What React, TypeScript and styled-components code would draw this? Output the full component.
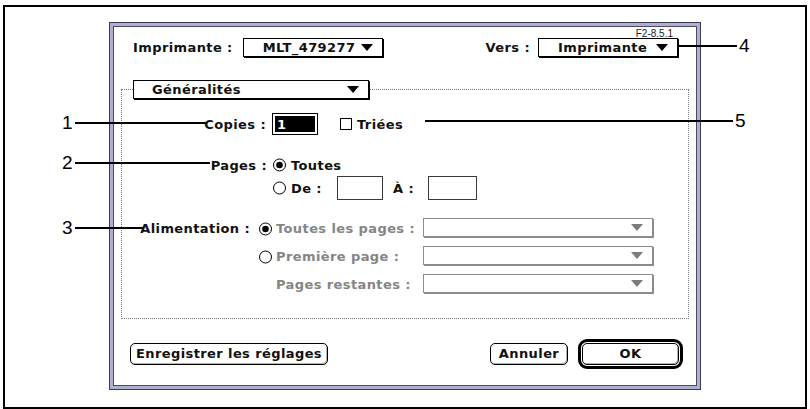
import React from 'react';
import styled, { createGlobalStyle } from 'styled-components';

const GlobalStyle = createGlobalStyle`
  html, body {
    margin: 0;
    padding: 0;
    background: #fff;
  }
  body {
    font-family: "DejaVu Sans", "Liberation Sans", sans-serif;
  }
`;

const Page = styled.div`
  position: relative;
  box-sizing: border-box;
  width: 810px;
  height: 409px;
  padding: 5px 0 0 3px;
  background: #fff;
  overflow: hidden;
`;

const Figure = styled.div`
  box-sizing: border-box;
  width: 804px;
  height: 404px;
  border: 2px solid #000;
  padding: 15px 0 0 104px;
`;

const Dialog = styled.div`
  box-sizing: border-box;
  width: 592px;
  height: 368px;
  border: 1px solid #3a3a52;
  box-shadow: inset 0 0 0 3px #aeaed0, inset 0 0 0 4px #4a4a62;
  background: #fff;
  display: flex;
  flex-direction: column;
  font-family: "DejaVu Sans", "Liberation Sans", sans-serif;
  font-weight: bold;
  font-size: 13px;
  letter-spacing: 0.4px;
  color: #111;
`;

const VersionTag = styled.div`
  align-self: flex-end;
  margin: 6px 27px 0 0;
  height: 9px;
  font-family: "Liberation Sans", Arial, sans-serif;
  font-weight: normal;
  font-size: 10px;
  line-height: 9px;
  letter-spacing: 0;
  color: #222;
`;

const TopRow = styled.div`
  display: flex;
  justify-content: space-between;
  height: 20px;
  padding: 0 22px 0 23px;
`;

const LabeledControl = styled.div<{ $gap: number }>`
  display: flex;
  align-items: center;
  gap: ${p => p.$gap}px;
  height: 19px;
`;

const Label = styled.span<{ $disabled?: boolean }>`
  line-height: 1;
  white-space: nowrap;
  color: ${p => (p.$disabled ? '#858585' : '#111')};
`;

const Popup = styled.div<{ $width: number; $inset: number; $disabled?: boolean }>`
  box-sizing: border-box;
  flex: none;
  width: ${p => p.$width}px;
  height: 19px;
  display: flex;
  align-items: center;
  padding: 0 9px 0 ${p => p.$inset}px;
  border: 1px solid ${p => (p.$disabled ? '#8c8c8c' : '#000')};
  box-shadow: 1px 1px 0 ${p => (p.$disabled ? '#8c8c8c' : '#000')};
  background: #fff;
`;

const PopupText = styled.span`
  flex: 1;
  line-height: 1;
  white-space: nowrap;
`;

const GroupBox = styled.div`
  box-sizing: border-box;
  height: 230px;
  margin: 31px 11px 0 11px;
  border: 1px dotted #7a7a7a;
  display: flex;
  flex-direction: column;
`;

const GroupPopup = styled(Popup)`
  align-self: flex-start;
  margin: -10px 0 0 11px;
`;

const OptionRow = styled.div<{ $top: number; $height: number }>`
  display: flex;
  align-items: center;
  height: ${p => p.$height}px;
  margin-top: ${p => p.$top}px;
`;

const RowLabel = styled.span<{ $width: number; $pad: number }>`
  box-sizing: border-box;
  flex: none;
  width: ${p => p.$width}px;
  padding-right: ${p => p.$pad}px;
  text-align: right;
  line-height: 1;
  white-space: nowrap;
`;

const InlineLabel = styled.span<{ $width: number; $left?: number }>`
  flex: none;
  width: ${p => p.$width}px;
  margin-left: ${p => p.$left ?? 0}px;
  line-height: 1;
  white-space: nowrap;
`;

const CopiesField = styled.div`
  box-sizing: border-box;
  flex: none;
  width: 46px;
  height: 22px;
  margin-right: 22px;
  padding: 2px;
  border: 1px solid #000;
  display: flex;
`;

const Selection = styled.div`
  flex: 1;
  display: flex;
  align-items: center;
  padding-left: 2px;
  background: #000;
  color: #fff;
  line-height: 1;
`;

const EntryField = styled.div<{ $width: number }>`
  box-sizing: border-box;
  flex: none;
  width: ${p => p.$width}px;
  height: 24px;
  border: 1px solid #3a3a3a;
  background: #fff;
`;

const Check = styled.span`
  box-sizing: border-box;
  flex: none;
  width: 12px;
  height: 12px;
  margin-right: 5px;
  border: 1px solid #000;
  background: #fff;
`;

const RadioMark = styled.svg`
  flex: none;
  display: block;
`;

const ChoiceGap = styled.span`
  flex: none;
  width: 5px;
`;

const FeedGrid = styled.div`
  display: grid;
  grid-template-columns: 136px 18px 147px 230px;
  grid-auto-rows: 21px;
  row-gap: 7px;
  margin-top: 18px;
  align-items: center;
`;

const FeedLabel = styled.span`
  padding-right: 8px;
  text-align: right;
  line-height: 1;
  white-space: nowrap;
`;

const FeedPopup = styled(Popup)`
  align-self: start;
`;

const ButtonRow = styled.div`
  display: flex;
  align-items: center;
  height: 31px;
  margin-top: 19px;
  padding: 0 17px 0 20px;
`;

const PushButton = styled.div<{ $width: number; $push?: boolean }>`
  box-sizing: border-box;
  flex: none;
  width: ${p => p.$width}px;
  height: 22px;
  margin-left: ${p => (p.$push ? 'auto' : '0')};
  display: flex;
  align-items: center;
  justify-content: center;
  border: 1px solid #000;
  border-radius: 5px;
  box-shadow: inset -1px -1px 0 #b4b4b4;
  background: #fff;
  line-height: 1;
  white-space: nowrap;
`;

const DefaultRing = styled.div`
  box-sizing: border-box;
  flex: none;
  width: 105px;
  height: 30px;
  margin-left: 10px;
  padding: 1px;
  border: 3px solid #000;
  border-radius: 9px;
  display: flex;
`;

const DefaultButton = styled(PushButton)`
  flex: 1;
  width: auto;
`;

const Callout = styled.div<{ $left: number; $top: number }>`
  position: absolute;
  left: ${p => p.$left}px;
  top: ${p => p.$top}px;
  height: 20px;
  display: flex;
  align-items: center;
  gap: 2px;
  font-family: "Liberation Sans", Arial, sans-serif;
  font-size: 19px;
  line-height: 20px;
  color: #000;
`;

const Leader = styled.span<{ $length: number }>`
  display: block;
  width: ${p => p.$length}px;
  height: 2px;
  background: #000;
`;

function Arrow({ disabled }: { disabled?: boolean }) {
  return (
    <svg width="12" height="7" viewBox="0 0 12 7" style={{ flex: 'none', display: 'block' }}>
      <polygon points="0,0 12,0 6,7" fill={disabled ? '#7c7c7c' : '#000'} />
    </svg>
  );
}

function Radio({ on }: { on?: boolean }) {
  return (
    <RadioMark width="14" height="14" viewBox="0 0 14 14">
      <circle cx="7.5" cy="7" r="6" fill="#fff" stroke="#000" strokeWidth="1" />
      {on && <circle cx="7.5" cy="7" r="3.3" fill="#000" />}
    </RadioMark>
  );
}

const feedRows = [
  { label: 'Alimentation :', text: 'Toutes les pages :', radio: 'on' },
  { label: '', text: 'Première page :', radio: 'off' },
  { label: '', text: 'Pages restantes :', radio: 'none' },
];

const callouts = [
  { n: '1', left: 62, top: 113, length: 131, side: 'left' },
  { n: '2', left: 62, top: 153, length: 135, side: 'left' },
  { n: '3', left: 62, top: 218, length: 68, side: 'left' },
  { n: '4', left: 678, top: 36, length: 59, side: 'right' },
  { n: '5', left: 425, top: 111, length: 308, side: 'right' },
];

export default function App() {
  return (
    <>
      <GlobalStyle />
      <Page>
        <Figure>
          <Dialog>
            <VersionTag>F2-8.5.1</VersionTag>
            <TopRow>
              <LabeledControl $gap={10}>
                <Label>Imprimante :</Label>
                <Popup $width={140} $inset={19}>
                  <PopupText>MLT_479277</PopupText>
                  <Arrow />
                </Popup>
              </LabeledControl>
              <LabeledControl $gap={8}>
                <Label>Vers :</Label>
                <Popup $width={140} $inset={19}>
                  <PopupText>Imprimante</PopupText>
                  <Arrow />
                </Popup>
              </LabeledControl>
            </TopRow>

            <GroupBox>
              <GroupPopup $width={236} $inset={18}>
                <PopupText>Généralités</PopupText>
                <Arrow />
              </GroupPopup>

              <OptionRow $top={14} $height={22}>
                <RowLabel $width={150} $pad={6}>Copies :</RowLabel>
                <CopiesField>
                  <Selection>1</Selection>
                </CopiesField>
                <Check />
                <Label>Triées</Label>
              </OptionRow>

              <OptionRow $top={23} $height={14}>
                <RowLabel $width={150} $pad={5}>Pages :</RowLabel>
                <Radio on />
                <ChoiceGap />
                <Label>Toutes</Label>
              </OptionRow>

              <OptionRow $top={4} $height={24}>
                <RowLabel $width={150} $pad={0} />
                <Radio />
                <ChoiceGap />
                <InlineLabel $width={46}>De :</InlineLabel>
                <EntryField $width={46} />
                <InlineLabel $width={35} $left={10}>À :</InlineLabel>
                <EntryField $width={49} />
              </OptionRow>

              <FeedGrid>
                {feedRows.map(row => (
                  <React.Fragment key={row.text}>
                    <FeedLabel>{row.label}</FeedLabel>
                    <span>{row.radio !== 'none' && <Radio on={row.radio === 'on'} />}</span>
                    <Label $disabled>{row.text}</Label>
                    <FeedPopup $width={230} $inset={10} $disabled>
                      <PopupText />
                      <Arrow disabled />
                    </FeedPopup>
                  </React.Fragment>
                ))}
              </FeedGrid>
            </GroupBox>

            <ButtonRow>
              <PushButton $width={198}>Enregistrer les réglages</PushButton>
              <PushButton $width={78} $push>
                Annuler
              </PushButton>
              <DefaultRing>
                <DefaultButton $width={0}>OK</DefaultButton>
              </DefaultRing>
            </ButtonRow>
          </Dialog>
        </Figure>

        {callouts.map(c => (
          <Callout key={c.n} $left={c.left} $top={c.top}>
            {c.side === 'left' && <span>{c.n}</span>}
            <Leader $length={c.length} />
            {c.side === 'right' && <span>{c.n}</span>}
          </Callout>
        ))}
      </Page>
    </>
  );
}
